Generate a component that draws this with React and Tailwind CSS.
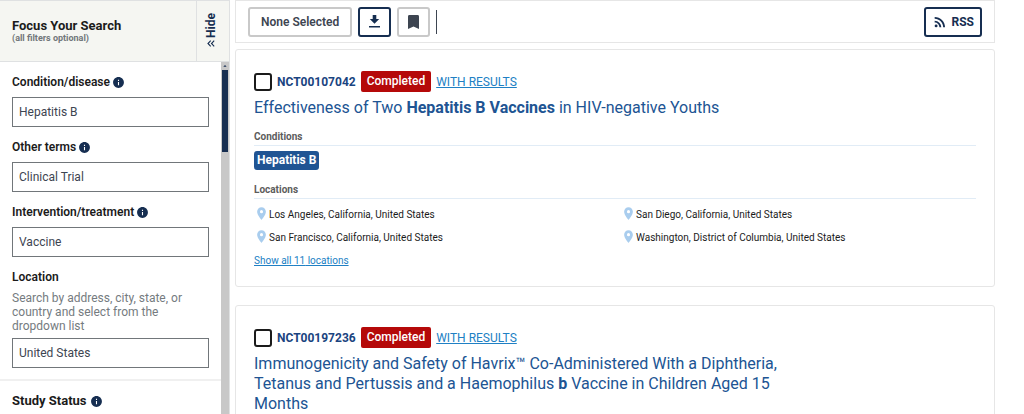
import React, { useState } from "react";
import { MdInfo, MdPlace, MdRssFeed, MdArrowDropUp } from "react-icons/md";

const fields = [
  { id: "condition", label: "Condition/disease", value: "Hepatitis B", info: true },
  { id: "terms", label: "Other terms", value: "Clinical Trial", info: true },
  { id: "intervention", label: "Intervention/treatment", value: "Vaccine", info: true },
  {
    id: "location",
    label: "Location",
    value: "United States",
    hint: "Search by address, city, state, or country and select from the dropdown list",
  },
];

const studies = [
  {
    id: "NCT00107042",
    title: (
      <>
        Effectiveness of Two <b className="font-bold">Hepatitis B Vaccines</b> in HIV-negative Youths
      </>
    ),
    conditions: ["Hepatitis B"],
    locations: [
      "Los Angeles, California, United States",
      "San Diego, California, United States",
      "San Francisco, California, United States",
      "Washington, District of Columbia, United States",
    ],
    total: 11,
  },
  {
    id: "NCT00197236",
    title: (
      <>
        Immunogenicity and Safety of Havrix™ Co-Administered With a Diphtheria, Tetanus and Pertussis
        and a Haemophilus <b className="font-bold">b</b> Vaccine in Children Aged 15 Months
      </>
    ),
    conditions: [],
    locations: [],
  },
];

const Field = ({ field }) => {
  const [value, setValue] = useState(field.value);

  return (
    <div className="mb-2.5">
      <label htmlFor={field.id} className="flex h-5 items-center gap-0.5 text-[12px] font-semibold text-[#1b1b1b]">
        {field.label}
        {field.info && <MdInfo className="size-[13px] text-[#162e51]" />}
      </label>
      {field.hint && <p className="mt-1 text-[12px] leading-[14px] text-[#757b80]">{field.hint}</p>}
      <input
        id={field.id}
        type="text"
        value={value}
        onChange={(e) => setValue(e.target.value)}
        className="mt-[5px] block h-[30px] w-full border border-[#71767a] bg-white px-1.5 text-[12px] text-[#3d4551] outline-none"
      />
    </div>
  );
};

const Sidebar = () => (
  <aside className="flex w-[230px] shrink-0 flex-col border-t border-r border-[#dfe1e2]">
    <div className="flex h-[61px] shrink-0 border-b border-[#dfe1e2] bg-[#f5f6f2]">
      <div className="flex-1 pt-[17px] pl-3">
        <h2 className="text-[13px] leading-4 font-bold text-[#1b1b1b]">Focus Your Search</h2>
        <p className="text-[9px] leading-2 font-bold text-[#71767a]">(all filters optional)</p>
      </div>
      <button className="flex w-[33px] flex-col items-center gap-0.5 border-l border-[#dfe1e2] pt-3 pr-1 text-[#162e51]">
        <span className="rotate-180 text-[12px] leading-4 font-bold [writing-mode:vertical-rl]">Hide</span>
        <svg viewBox="0 0 8 7" className="h-[7px] w-2" fill="none" stroke="currentColor" strokeWidth="1.1">
          <path d="M3.7.7 1 3.5l2.7 2.8M7.2.7 4.5 3.5l2.7 2.8" />
        </svg>
      </button>
    </div>
    <div className="flex min-h-0 flex-1">
      <div className="flex-1">
        <div className="border-b-2 border-[#f0f0f0] px-3 pt-2.5 pb-px">
          {fields.map((f) => (
            <Field key={f.id} field={f} />
          ))}
        </div>
        <h3 className="flex items-center gap-[3px] pt-2.5 pl-3 text-[13px] leading-5 font-bold text-[#1b1b1b]">
          Study Status
          <MdInfo className="size-[13px] text-[#162e51]" />
        </h3>
      </div>
      <div className="w-2 shrink-0 bg-[#c8c8c8] text-[#162e51]">
        <MdArrowDropUp className="size-2" />
        <div className="mx-px h-[82px] bg-[#162e51]" />
      </div>
    </div>
  </aside>
);

const Toolbar = () => (
  <div className="flex h-[43px] items-center gap-1.5 border border-[#e6e6e6] px-3">
    <button className="h-[30px] rounded-[3px] border-2 border-[#c9c9c9] px-[11px] text-[12px] font-semibold text-[#3d4551]">
      None Selected
    </button>
    <button
      aria-label="Download"
      className="flex h-[30px] w-[33px] items-center justify-center rounded-[3px] border-2 border-[#162e51] text-[#162e51]"
    >
      <svg viewBox="0 0 11 13" className="h-[13px] w-[11px]" fill="currentColor">
        <path d="M3.7 0h3.6v4h2.9L5.5 8.7.8 4h2.9zM0 11h11v1.5H0z" />
      </svg>
    </button>
    <button
      aria-label="Save"
      className="flex h-[30px] w-[33px] items-center justify-center rounded-[3px] border-2 border-[#c9c9c9] text-[#3d4551]"
    >
      <svg viewBox="0 0 11 14" className="h-[14px] w-[11px]" fill="currentColor">
        <path d="M1.4 0h8.2Q11 0 11 1.4V14l-5.5-2.4L0 14V1.4Q0 0 1.4 0z" />
      </svg>
    </button>
    <div className="h-6 w-px bg-[#3d4551]" />
    <button className="ml-auto flex h-[30px] items-center gap-1 rounded-[3px] border-2 border-[#162e51] px-1.5 text-[12px] font-bold text-[#162e51]">
      <MdRssFeed className="size-4" />
      RSS
    </button>
  </div>
);

const StudyCard = ({ study }) => (
  <article className="rounded-[3px] border border-[#e6e6e6] px-[18px] pt-[21px] pb-[17px]">
    <div className="flex items-center gap-[5px]">
      <input
        id={study.id}
        type="checkbox"
        className="size-[18px] appearance-none rounded-[3px] border-2 border-[#1b1b1b] bg-white"
      />
      <label htmlFor={study.id} className="text-[12px] leading-5 font-bold text-[#1a4480]">
        {study.id}
      </label>
      <span className="rounded-[2px] bg-[#b50909] px-1.5 text-[12px] leading-[21px] font-medium text-white">
        Completed
      </span>
      <a href="#results" className="text-[12px] leading-5 text-[#2080c4] underline">
        WITH RESULTS
      </a>
    </div>
    <h2 className="mt-1.5 max-w-[550px] text-[16px] leading-5 text-[#205493]">{study.title}</h2>
    {study.conditions.length > 0 && (
      <>
        <h3 className="mt-[11px] border-b border-[#e1ecf6] text-[10px] leading-4 font-bold text-[#5c5c5c]">
          Conditions
        </h3>
        <div className="mt-[5px] flex">
          {study.conditions.map((c) => (
            <span key={c} className="rounded-[3px] bg-[#205493] px-[3px] text-[12px] leading-[19px] font-bold text-white">
              {c}
            </span>
          ))}
        </div>
      </>
    )}
    {study.locations.length > 0 && (
      <>
        <h3 className="mt-3 border-b border-[#e1ecf6] text-[10px] leading-4 font-bold text-[#5c5c5c]">
          Locations
        </h3>
        <ul className="mt-[7px] grid grid-cols-2 gap-x-3 gap-y-[5px]">
          {study.locations.map((l) => (
            <li key={l} className="flex items-start text-[10px] leading-[18px] text-[#1b1b1b]">
              <MdPlace className="size-[15px] text-[#a9cdee]" />
              {l}
            </li>
          ))}
        </ul>
        <a href="#locations" className="mt-1.5 block text-[10px] leading-4 text-[#2080c4] underline">
          Show all {study.total} locations
        </a>
      </>
    )}
  </article>
);

const App = () => {
  return (
    <div className="flex h-screen overflow-hidden bg-white font-[Roboto,sans-serif]">
      <Sidebar />
      <main className="mr-[29px] ml-[5px] min-w-0 flex-1">
        <Toolbar />
        <div className="mt-1.5 flex flex-col gap-[18px]">
          {studies.map((s) => (
            <StudyCard key={s.id} study={s} />
          ))}
        </div>
      </main>
    </div>
  );
};

export default App;
